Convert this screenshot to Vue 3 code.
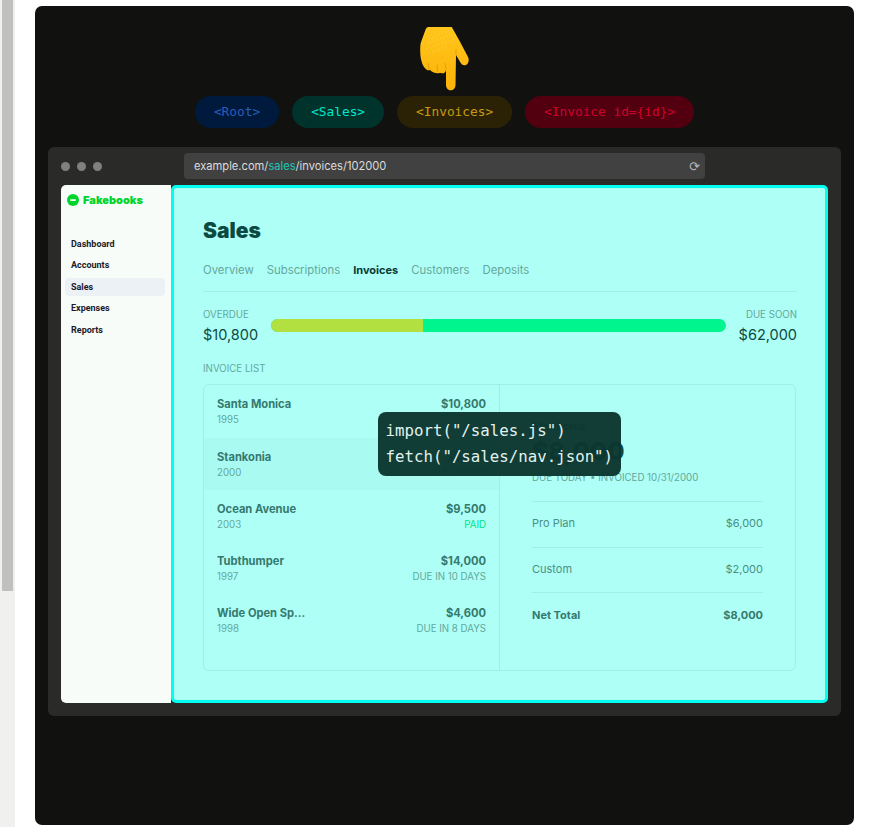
<template>
  <div class="page">
    <div class="rail"><div class="thumb"></div></div>
    <div class="stage">
      <svg class="hand" viewBox="0 0 50 64" width="50" height="64">
        <defs>
          <linearGradient id="skin" x1="0" y1="0" x2="0" y2="1">
            <stop offset="0" stop-color="#ffc61c" />
            <stop offset="1" stop-color="#fdb208" />
          </linearGradient>
        </defs>
        <path
          d="M5.7 2.3 C6.3 1 7 0 8.5 0 L31.7 0 L35 5.7 L40 14.7 L48 30 C49.5 33 48.5 37 46 38 C43.5 39 41.5 37.5 40 34.7 L36 28 L35.5 58 C35.3 65 26.2 65 26 58 L26 43 C25.5 46.5 22.5 47 20 45.7 C18 47 13 46 10 43 C7 44.5 3 40 1.7 34.7 C0.2 30 -0.3 22 0.7 16 Z"
          fill="url(#skin)"
        />
        <path d="M8 36 L9 43 M17 37 L17.5 45 M25 36 L26 43" stroke="#ec9f00" stroke-width="1" fill="none" />
        <path d="M36 22 L36 28" stroke="#ec9f00" stroke-width="1" fill="none" />
        <path
          d="M9 12 L30 3 M7 17 L32 7 M6 22 L34 12 M9 26 L28 19"
          stroke="#ffe27a"
          stroke-width="0.9"
          stroke-dasharray="0.9 2.6"
          stroke-opacity="0.7"
          fill="none"
        />
      </svg>

      <div class="pills">
        <span class="pill root">&lt;Root&gt;</span>
        <span class="pill sales">&lt;Sales&gt;</span>
        <span class="pill invoices">&lt;Invoices&gt;</span>
        <span class="pill invoice">&lt;Invoice id={id}&gt;</span>
      </div>

      <div class="browser">
        <div class="toolbar">
          <div class="dots"><i></i><i></i><i></i></div>
          <div class="url">
            <span>example.com/<b>sales</b>/invoices/102000</span>
            <span class="reload">⟳</span>
          </div>
        </div>

        <div class="app">
          <aside class="side">
            <div class="logo">
              <svg viewBox="0 0 12 12" width="12" height="12">
                <circle cx="6" cy="6" r="6" fill="#00d52b" />
                <rect x="3" y="5.2" width="6" height="1.7" rx="0.8" fill="#f7fcf9" />
              </svg>
              Fakebooks
            </div>
            <nav class="nav">
              <a v-for="item in nav" :key="item" :class="{ on: item === 'Sales' }">{{ item }}</a>
            </nav>
          </aside>

          <main class="main">
            <h1>Sales</h1>
            <div class="tabs">
              <a v-for="tab in tabs" :key="tab" :class="{ on: tab === 'Invoices' }">{{ tab }}</a>
            </div>

            <div class="summary">
              <div class="sum">
                <small>OVERDUE</small>
                <span>$10,800</span>
              </div>
              <div class="bar"><div class="bar-over"></div></div>
              <div class="sum right">
                <small>DUE SOON</small>
                <span>$62,000</span>
              </div>
            </div>

            <div class="list-label">INVOICE LIST</div>
            <div class="card">
              <div class="list">
                <div v-for="row in invoices" :key="row.name" class="row" :class="{ on: row.name === 'Stankonia' }">
                  <div class="row-line">
                    <strong>{{ row.name }}</strong>
                    <strong>{{ row.amount }}</strong>
                  </div>
                  <div class="row-line sub">
                    <span>{{ row.year }}</span>
                    <span :class="{ paid: row.status === 'PAID' }">{{ row.status }}</span>
                  </div>
                </div>
              </div>
              <div class="detail">
                <div class="detail-name">Stankonia</div>
                <div class="detail-total">$8,000</div>
                <div class="detail-meta">DUE TODAY • INVOICED 10/31/2000</div>
                <div class="lines">
                  <div v-for="line in lines" :key="line.label" class="line" :class="{ total: line.total }">
                    <span>{{ line.label }}</span>
                    <span>{{ line.value }}</span>
                  </div>
                </div>
              </div>
            </div>

            <div class="requests">
              <div>import("/sales.js")</div>
              <div>fetch("/sales/nav.json")</div>
            </div>
          </main>
        </div>
      </div>
    </div>
  </div>
</template>

<script setup>
const nav = ['Dashboard', 'Accounts', 'Sales', 'Expenses', 'Reports']
const tabs = ['Overview', 'Subscriptions', 'Invoices', 'Customers', 'Deposits']

const invoices = [
  { name: 'Santa Monica', year: '1995', amount: '$10,800', status: 'OVERDUE' },
  { name: 'Stankonia', year: '2000', amount: '$8,000', status: 'DUE TODAY' },
  { name: 'Ocean Avenue', year: '2003', amount: '$9,500', status: 'PAID' },
  { name: 'Tubthumper', year: '1997', amount: '$14,000', status: 'DUE IN 10 DAYS' },
  { name: 'Wide Open Sp...', year: '1998', amount: '$4,600', status: 'DUE IN 8 DAYS' }
]

const lines = [
  { label: 'Pro Plan', value: '$6,000' },
  { label: 'Custom', value: '$2,000' },
  { label: 'Net Total', value: '$8,000', total: true }
]
</script>

<style>
html,
body {
  margin: 0;
  background: #fff;
  overflow: hidden;
}
</style>

<style scoped>
.page {
  display: flex;
  height: 827px;
  font-family: Inter, "Liberation Sans", sans-serif;
  overflow: hidden;
}

/* scrollbar of the page behind */
.rail {
  flex: none;
  width: 15px;
  background: #f0f0ee;
}

.thumb {
  width: 11px;
  height: 591px;
  margin-left: 2px;
  background: #c0c0be;
}

.stage {
  flex: none;
  display: flex;
  flex-direction: column;
  align-items: center;
  box-sizing: border-box;
  width: 819px;
  height: 819px;
  margin: 6px 0 0 20px;
  padding-top: 21px;
  background: #111110;
  border-radius: 7px;
}

.hand {
  flex: none;
  margin-left: 1px;
  height: 64px;
}

.pills {
  display: flex;
  gap: 13px;
  margin-top: 5px;
}

.pill {
  display: flex;
  align-items: center;
  box-sizing: border-box;
  height: 32px;
  padding: 0 19px 2px;
  border-radius: 16px;
  font-family: "DejaVu Sans Mono", monospace;
  font-size: 12.8px;
}

.root {
  background: #001a3d;
  color: #2a5db8;
}

.sales {
  background: #00332c;
  color: #00e6cf;
}

.invoices {
  background: #2b2205;
  color: #c79a10;
}

.invoice {
  background: #52000f;
  color: #d0002c;
}

.browser {
  width: 793px;
  height: 569px;
  margin-top: 19px;
  background: #2a2a29;
  border-radius: 6px;
}

.toolbar {
  display: flex;
  align-items: center;
  gap: 82px;
  box-sizing: border-box;
  height: 38px;
  padding: 6px 0 6px 13px;
}

.dots {
  display: flex;
  gap: 7px;
}

.dots i {
  width: 9px;
  height: 9px;
  border-radius: 50%;
  background: #808080;
}

.url {
  display: flex;
  align-items: center;
  justify-content: space-between;
  box-sizing: border-box;
  width: 521px;
  height: 26px;
  padding: 0 5px 0 10px;
  background: #414141;
  border-radius: 4px;
  color: #dcdcdc;
  font-size: 11.15px;
}

.url b {
  font-weight: 400;
  color: #1cc7b4;
}

.reload {
  font-family: "DejaVu Sans", sans-serif;
  font-size: 13px;
  color: #b4b4b4;
}

.app {
  display: flex;
  width: 767px;
  height: 518px;
  margin-left: 13px;
}

.side {
  flex: none;
  box-sizing: border-box;
  width: 110px;
  padding: 9px 6px 0 4px;
  background: #f7fcf9;
  border-radius: 5px 0 0 5px;
}

.logo {
  display: flex;
  align-items: center;
  gap: 4px;
  margin-left: 2px;
  height: 12px;
  font-size: 11px;
  font-weight: 900;
  color: #00d52b;
}

.nav {
  display: flex;
  flex-direction: column;
  gap: 3.4px;
  margin-top: 29px;
}

.nav a {
  height: 18px;
  padding-left: 6px;
  line-height: 18px;
  font-family: Roboto, "Liberation Sans", sans-serif;
  font-size: 9px;
  font-weight: 700;
  color: #1c1a2a;
  border-radius: 4px;
}

.nav a.on {
  background: #ecf1f6;
}

.main {
  position: relative;
  flex: none;
  box-sizing: border-box;
  width: 657px;
  padding: 30px 28px 0 29px;
  background: #aefff5;
  border: 3px solid #00ffee;
  border-radius: 5px;
}

h1 {
  margin: 0;
  font-size: 21px;
  line-height: 26px;
  font-weight: 900;
  color: #0a4a42;
}

.tabs {
  display: flex;
  gap: 13px;
  height: 29px;
  margin-top: 18px;
  border-bottom: 1px solid #9df0e6;
  font-size: 11.35px;
  line-height: 16px;
  color: #64a79d;
}

.tabs a.on {
  font-size: 11px;
  font-weight: 700;
  color: #0b3a34;
}

.summary {
  display: flex;
  align-items: flex-start;
  gap: 13px;
  margin-top: 17px;
}

.sum {
  display: flex;
  flex-direction: column;
  gap: 4px;
}

.sum.right {
  align-items: flex-end;
}

.sum small {
  font-size: 9.7px;
  line-height: 12px;
  color: #64a79d;
}

.sum span {
  font-size: 14.5px;
  line-height: 20px;
  color: #0b4a42;
}

.bar {
  flex: 1;
  height: 13px;
  margin-top: 10px;
  background: #00f58f;
  border-radius: 7px;
  overflow: hidden;
}

.bar-over {
  width: 33.4%;
  height: 100%;
  background: #b1e040;
}

.list-label {
  margin-top: 18px;
  font-size: 9.7px;
  line-height: 12px;
  color: #64a79d;
}

.card {
  display: flex;
  box-sizing: border-box;
  width: 593px;
  height: 287px;
  margin-top: 9px;
  border: 1px solid #9df0e6;
  border-radius: 6px;
}

.list {
  flex: none;
  box-sizing: border-box;
  width: 296px;
  padding-top: 1px;
  border-right: 1px solid #9df0e6;
}

.row {
  box-sizing: border-box;
  height: 52.2px;
  padding: 10.4px 13px 0 13px;
}

.row.on {
  background: #a9fbf1;
}

.row-line {
  display: flex;
  justify-content: space-between;
  font-size: 11.15px;
  line-height: 16px;
  color: #35796f;
}

.row-line strong {
  font-weight: 700;
}

.sub {
  font-size: 9.7px;
  line-height: 15px;
  color: #64a79d;
}

.paid {
  color: #00e28c;
}

.detail {
  flex: 1;
  padding: 33px 32px 0 32px;
  color: #2b6f66;
}

.detail-name {
  font-size: 11px;
  font-weight: 700;
  line-height: 16px;
}

.detail-total {
  font-size: 25px;
  font-weight: 800;
  line-height: 34px;
  color: #0b4a42;
}

.detail-meta {
  margin-top: 3px;
  font-size: 9.7px;
  line-height: 14px;
  color: #64a79d;
}

.lines {
  margin-top: 16px;
}

.line {
  display: flex;
  justify-content: space-between;
  box-sizing: border-box;
  height: 45.5px;
  border-top: 1px solid #9df0e6;
  font-size: 11px;
  line-height: 43px;
  color: #4a8f85;
}

.line.total {
  padding-top: 1px;
  font-weight: 700;
  color: #35796f;
}

.requests {
  position: absolute;
  left: 204px;
  top: 224px;
  box-sizing: border-box;
  width: 243px;
  height: 64px;
  padding: 6px 0 0 7.5px;
  background: rgba(11, 55, 48, 0.97);
  border-radius: 8px;
  font-family: "DejaVu Sans Mono", monospace;
  font-size: 15.75px;
  line-height: 26px;
  color: #e2f2ee;
}
</style>
